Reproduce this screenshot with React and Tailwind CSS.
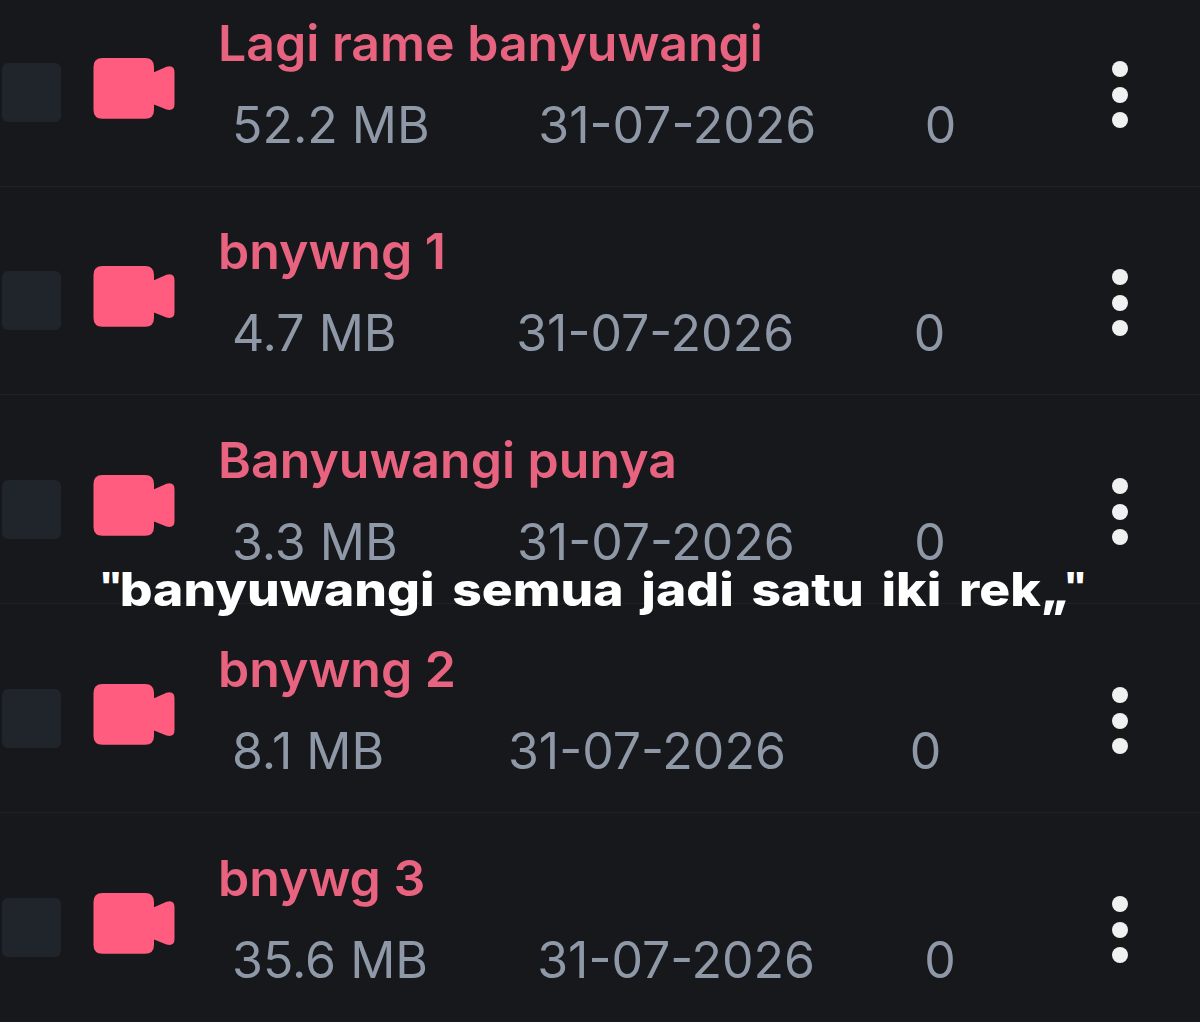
const files = [
  { name: "Lagi rame banyuwangi", size: "52.2 MB", row: "h-[187px]" },
  { name: "bnywng 1", size: "4.7 MB", row: "h-[208px]" },
  { name: "Banyuwangi punya", size: "3.3 MB", row: "h-[209px]" },
  { name: "bnywng 2", size: "8.1 MB", row: "h-[209px]" },
  { name: "bnywg 3", size: "35.6 MB", row: "h-[208px]" },
];

function VideoIcon() {
  return (
    <svg className="mb-[66px] ml-[32px] h-[62px] w-[83px] shrink-0 fill-[#ff5c7f]" viewBox="0 0 83 62">
      <path d="M9.500 0H52Q61 0 61 9V14.300L73.500 8.800Q81.500 6.500 81.500 14.500V46Q81.500 53.500 73.500 51.500L61 46.500V52Q61 60.700 52 60.700H9.500Q.5 60.700 .5 52V9Q.5 0 9.500 0Z" />
    </svg>
  );
}

function FileRow({ file }) {
  return (
    <li className={"flex items-end border-b border-[#202126] last:border-b-0 " + file.row}>
      <span className="mb-[64px] ml-[2px] h-[59px] w-[59px] shrink-0 rounded-[6px] bg-[#20242b]" />
      <VideoIcon />
      <div className="mb-[33px] ml-[42px] flex w-[870px] shrink-0 flex-col">
        <span className="h-[84px] text-[50px] leading-[60px] font-semibold whitespace-nowrap text-[#e8637f]">{file.name}</span>
        <div className="ml-[14px] flex w-[833px] justify-between text-[50px] leading-[56px] whitespace-nowrap text-[#8e98a6]">
          <span>{file.size}</span>
          <span>31-07-2026</span>
          <span>0</span>
          <span />
        </div>
      </div>
      <span className="mb-[58px] ml-[24px] flex shrink-0 flex-col gap-[9.500px]">
        <i className="size-4 rounded-full bg-[#f0f0f1]" />
        <i className="size-4 rounded-full bg-[#f0f0f1]" />
        <i className="size-4 rounded-full bg-[#f0f0f1]" />
      </span>
    </li>
  );
}

export default function App() {
  return (
    <main className="relative h-[1022px] w-[1200px] overflow-hidden bg-[#17181c] font-['Inter',sans-serif]">
      <ul>{files.map((file) => <FileRow key={file.name} file={file} />)}</ul>
      <p className="absolute top-[569px] left-[99px] flex origin-left scale-x-[1.12] text-[46px] leading-[40px] font-extrabold whitespace-nowrap text-white [word-spacing:5.800px]">
        <span className="mt-[-4px] w-[18.500px] text-[36px]">"</span>
        <span>banyuwangi semua jadi satu iki rek</span>
        <span className="tracking-[-6px]">,,</span>
        <span className="mt-[-4px] text-[36px]">"</span>
      </p>
    </main>
  );
}
